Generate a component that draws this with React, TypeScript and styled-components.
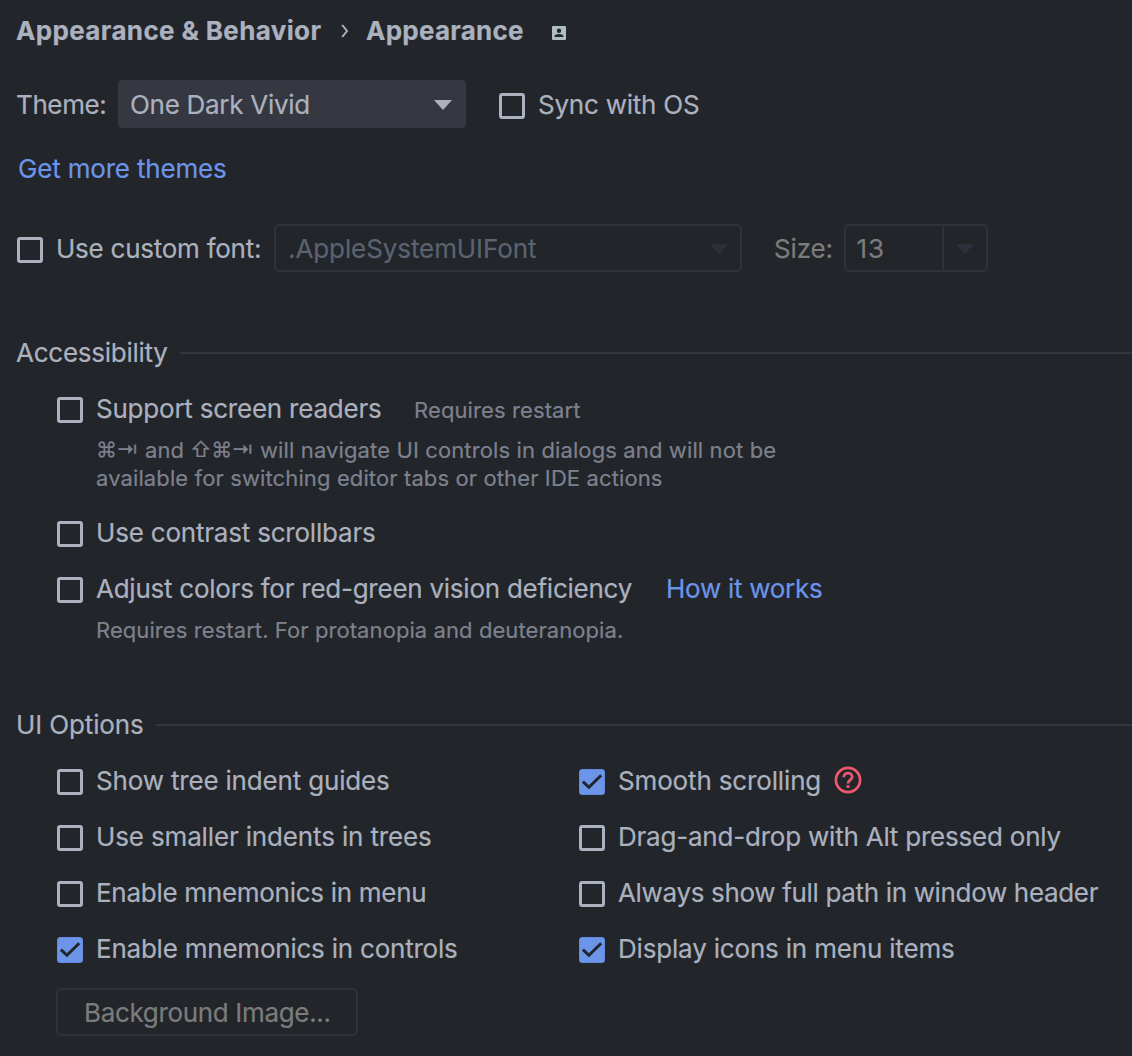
import React from "react";
import styled, { createGlobalStyle } from "styled-components";

const color = {
  bg: "#22252a",
  text: "#abb1be",
  muted: "#7e818d",
  disabled: "#5c626f",
  grey: "#7c7c7c",
  link: "#6c94e8",
  border: "#2f3238",
  line: "#34373b",
  combo: "#353840",
  danger: "#ee596e",
};

const GlobalStyle = createGlobalStyle`
  * { box-sizing: border-box; }
  body {
    margin: 0;
    background: ${color.bg};
    color: ${color.text};
    font-family: Inter, "Open Sans", sans-serif;
    font-size: 26px;
    -webkit-text-stroke: 0.2px currentColor;
    overflow: hidden;
  }
`;

const Page = styled.main`
  display: flex;
  flex-direction: column;
  width: 1132px;
  height: 1056px;
  padding-left: 16px;
  overflow: hidden;
`;

const Text = styled.span<{ $track?: number }>`
  flex: none;
  line-height: 32px;
  padding-top: 1px;
  white-space: pre;
  letter-spacing: ${(p) => p.$track ?? -0.2}px;
`;

const Crumbs = styled.nav`
  display: flex;
  align-items: center;
  height: 60px;
`;

const Crumb = styled(Text)<{ $width: number }>`
  width: ${(p) => p.$width}px;
  padding-top: 2px;
  font-weight: 700;
`;

const Separator = styled.svg`
  width: 8px;
  height: 14px;
  margin-right: 17px;
  margin-top: 1px;
`;

const ProjectBadge = styled.svg`
  width: 14px;
  height: 14px;
  margin-top: 6px;
`;

const Row = styled.div<{ $top?: number }>`
  display: flex;
  align-items: center;
  height: 48px;
  margin-top: ${(p) => p.$top ?? 0}px;
`;

const Cell = styled.div<{ $width: number }>`
  flex: none;
  display: flex;
  align-items: center;
  width: ${(p) => p.$width}px;
`;

const LinkText = styled.a<{ $track?: number }>`
  color: ${color.link};
  line-height: 32px;
  padding: 1px 0 0 2px;
  letter-spacing: ${(p) => p.$track ?? -0.18}px;
`;

const ThemeSelect = styled.div`
  display: flex;
  align-items: center;
  justify-content: space-between;
  width: 348px;
  height: 48px;
  margin-right: 32px;
  padding: 0 14px 0 12px;
  border-radius: 4px;
  background: ${color.combo};
`;

const Arrow = styled.svg<{ $dim?: boolean }>`
  width: 18px;
  height: 10px;
  margin-top: 1px;
  fill: ${(p) => (p.$dim ? "#2d303a" : color.text)};
`;

const FontSelect = styled.div`
  display: flex;
  align-items: center;
  justify-content: space-between;
  width: 468px;
  height: 48px;
  margin-right: 32px;
  padding: 0 12px;
  border: 2px solid ${color.border};
  border-radius: 5px;
  color: ${color.disabled};
`;

const SizeSelect = styled.div`
  display: grid;
  grid-template-columns: 98px 1fr;
  width: 144px;
  height: 48px;
  border: 2px solid ${color.border};
  border-radius: 5px;
`;

const SizeValue = styled.div`
  display: flex;
  align-items: center;
  padding-left: 10.5px;
  border-right: 2px solid ${color.border};
  color: ${color.grey};
  width: 98px;
`;

const SizeButton = styled.div`
  display: flex;
  align-items: center;
  padding-left: 12px;
`;

const Disabled = styled(Text)`
  color: ${color.grey};
`;

const Box = styled.span<{ $on?: boolean }>`
  flex: none;
  display: flex;
  width: 26px;
  height: 26px;
  margin: 4px 13px 0 1px;
  border: ${(p) => (p.$on ? "1px solid #628ae0" : `3px solid ${color.text}`)};
  border-radius: 3px;
  background: ${(p) => (p.$on ? color.link : "transparent")};
`;

const Section = styled.h2<{ $top: number }>`
  display: flex;
  align-items: center;
  gap: 12px;
  height: 48px;
  margin: ${(p) => p.$top}px 0 0;
  font-size: 26px;
  font-weight: 400;
`;

const Rule = styled.span`
  flex: 1;
  height: 2px;
  margin-top: 2px;
  background: ${color.line};
`;

const Body = styled.div`
  display: flex;
  flex-direction: column;
  padding: 8px 0 0 40px;
`;

const Hint = styled.div`
  display: flex;
  flex-direction: column;
  margin-left: 40px;
  padding-top: 4px;
  color: ${color.muted};
  font-size: 22px;
`;

const HintLine = styled.div<{ $track: number }>`
  display: flex;
  height: 28px;
  line-height: 28px;
  white-space: pre;
  letter-spacing: ${(p) => p.$track}px;
`;

const Keys = styled.span<{ $width: number }>`
  width: ${(p) => p.$width}px;
  font-size: 21px;
  letter-spacing: -0.4px;
`;

const Note = styled(Text)`
  margin-left: 32.5px;
  padding-top: 4px;
  color: ${color.muted};
  font-size: 22px;
`;

const Options = styled.div`
  display: grid;
  grid-template-columns: 522px 1fr;
  row-gap: 8px;
`;

const HelpIcon = styled.svg`
  width: 28px;
  height: 28px;
  margin-left: 13px;
`;

const ImageButton = styled.button`
  display: flex;
  align-items: center;
  width: 302px;
  height: 48px;
  margin-top: 16px;
  padding: 0 0 0 26px;
  border: 2px solid ${color.border};
  border-radius: 6px;
  background: transparent;
  color: ${color.grey};
  font: inherit;
`;

function Check({ label, on, track }: { label: string; on?: boolean; track: number }) {
  return (
    <>
      <Box $on={on}>
        {on && (
          <svg width="24" height="24" viewBox="0 0 24 24" fill="none" stroke={color.bg} strokeWidth="3">
            <path d="M2.9 11.7 8.9 17.3 21.2 5.3" />
          </svg>
        )}
      </Box>
      <Text $track={track}>{label}</Text>
    </>
  );
}

function Down({ dim }: { dim?: boolean }) {
  return (
    <Arrow viewBox="0 0 18 10" $dim={dim}>
      <path d="M0 0H18L9 10Z" />
    </Arrow>
  );
}

const options = [
  { label: "Show tree indent guides", track: -0.176 },
  { label: "Smooth scrolling", track: -0.15, on: true, help: true },
  { label: "Use smaller indents in trees", track: -0.15 },
  { label: "Drag-and-drop with Alt pressed only", track: -0.215 },
  { label: "Enable mnemonics in menu", track: -0.28 },
  { label: "Always show full path in window header", track: -0.335 },
  { label: "Enable mnemonics in controls", track: -0.223, on: true },
  { label: "Display icons in menu items", track: -0.182, on: true },
];

export default function App() {
  return (
    <Page>
      <GlobalStyle />
      <Crumbs>
        <Crumb $width={325} $track={0.36}>Appearance &amp; Behavior</Crumb>
        <Separator viewBox="0 0 8 14" fill="none" stroke={color.text} strokeWidth="2">
          <path d="M1.2 1 6 7 1.2 13" />
        </Separator>
        <Crumb $width={186} $track={0.25}>Appearance</Crumb>
        <ProjectBadge viewBox="0 0 14 14">
          <rect width="14" height="14" rx="1" fill="#b0bdc2" />
          <circle cx="7" cy="4.7" r="2.2" fill={color.bg} />
          <path d="M2.5 11V10.3C2.5 8.8 5 8 7 8S11.5 8.8 11.5 10.3V11Z" fill={color.bg} />
        </ProjectBadge>
      </Crumbs>

      <Row $top={20}>
        <Cell $width={102}>
          <Text $track={-0.392}>Theme:</Text>
        </Cell>
        <ThemeSelect>
          <Text $track={-0.29}>One Dark Vivid</Text>
          <Down />
        </ThemeSelect>
        <Check label="Sync with OS" track={-0.225} />
      </Row>

      <Row $top={16}>
        <LinkText>Get more themes</LinkText>
      </Row>

      <Row $top={32}>
        <Cell $width={258}>
          <Check label="Use custom font:" track={-0.25} />
        </Cell>
        <FontSelect>
          <Text $track={-0.091}>.AppleSystemUIFont</Text>
          <Down dim />
        </FontSelect>
        <Cell $width={70}>
          <Disabled $track={-0.155}>Size:</Disabled>
        </Cell>
        <SizeSelect>
          <SizeValue>
            <Text $track={1}>13</Text>
          </SizeValue>
          <SizeButton>
            <Down dim />
          </SizeButton>
        </SizeSelect>
      </Row>

      <Section $top={56}>
        <Text $track={-0.25}>Accessibility</Text>
        <Rule />
      </Section>
      <Body>
        <Row>
          <Check label="Support screen readers" track={-0.222} />
          <Note $track={0.11}>Requires restart</Note>
        </Row>
        <Hint>
          <HintLine $track={0.12}>
            <Keys $width={49}>⌘⇥</Keys>
            <Cell $width={45}>and</Cell>
            <Keys $width={70}>⇧⌘⇥</Keys>
            <span>will navigate UI controls in dialogs and will not be</span>
          </HintLine>
          <HintLine $track={0.115}>available for switching editor tabs or other IDE actions</HintLine>
        </Hint>
        <Row $top={16}>
          <Check label="Use contrast scrollbars" track={-0.203} />
        </Row>
        <Row $top={8}>
          <Cell $width={608}>
            <Check label="Adjust colors for red-green vision deficiency" track={-0.25} />
          </Cell>
          <LinkText $track={-0.274}>How it works</LinkText>
        </Row>
        <Hint>
          <HintLine $track={0.08}>Requires restart. For protanopia and deuteranopia.</HintLine>
        </Hint>
      </Body>

      <Section $top={56}>
        <Text $track={-0.133}>UI Options</Text>
        <Rule />
      </Section>
      <Body>
        <Options>
          {options.map((o) => (
            <Row key={o.label}>
              <Check label={o.label} track={o.track} on={o.on} />
              {o.help && (
                <HelpIcon viewBox="0 0 28 28" fill="none" stroke={color.danger} strokeWidth="2.7">
                  <circle cx="14" cy="14" r="12.1" />
                  <path d="M9.8 11.2C9.8 8.8 11.6 7.2 14 7.2S18.2 8.8 18.2 11C18.2 13.7 14 14.1 14 17.4" />
                  <path d="M14 19.2V21.9" strokeWidth="3" />
                </HelpIcon>
              )}
            </Row>
          ))}
        </Options>
        <ImageButton>
          <Text $track={-0.331}>Background Image...</Text>
        </ImageButton>
      </Body>
    </Page>
  );
}
